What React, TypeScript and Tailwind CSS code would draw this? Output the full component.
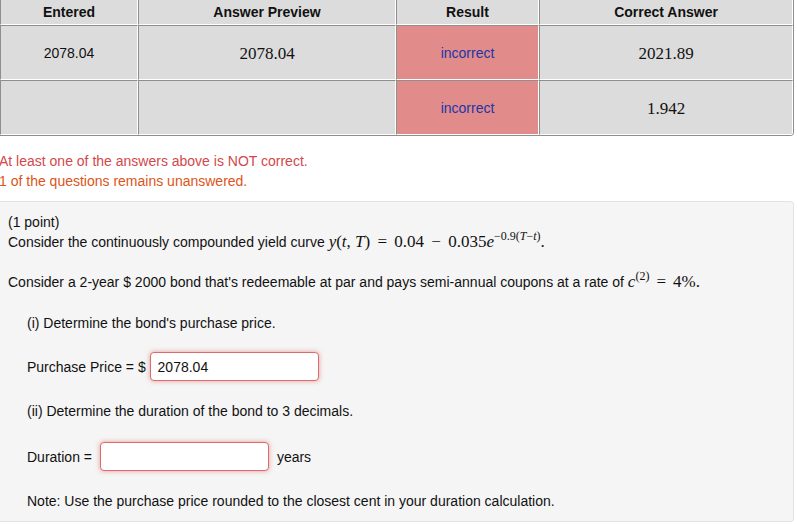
import React from "react";

const sans = { fontFamily: '"Liberation Sans", Arial, Helvetica, sans-serif' };
const serif = { fontFamily: '"Liberation Serif", "Times New Roman", serif' };

function Cell({
  children,
  className = "",
  top = true,
}: {
  children?: React.ReactNode;
  className?: string;
  top?: boolean;
}) {
  return (
    <div
      className={`flex items-center justify-center border-l border-l-[#8e8e8e] border-r border-r-white border-b border-b-white ${
        top ? "border-t border-t-[#8e8e8e]" : ""
      } ${className}`}
    >
      {children}
    </div>
  );
}

export default function App() {
  return (
    <div className="w-[797px] h-[524px] bg-white overflow-hidden text-[14px] text-[#111]" style={sans}>
      {/* Results table */}
      <div className="w-[794px] border-r border-b border-[#8e8e8e] rounded-br-[4px] overflow-hidden">
        <div className="grid grid-cols-[138px_258px_143px_254px] grid-rows-[25px_55px_55px] bg-[#dcdcdc]">
          <Cell top={false} className="font-bold">Entered</Cell>
          <Cell top={false} className="font-bold">Answer Preview</Cell>
          <Cell top={false} className="font-bold">Result</Cell>
          <Cell top={false} className="font-bold">Correct Answer</Cell>

          <Cell className="pt-[2px]">2078.04</Cell>
          <Cell className="text-[17px] pt-[2px]">
            <span style={serif}>2078.04</span>
          </Cell>
          <Cell className="bg-[#e18b8b] text-[#2036a8] pt-[2px]">incorrect</Cell>
          <Cell className="text-[17px] pt-[2px]">
            <span style={serif}>2021.89</span>
          </Cell>

          <Cell></Cell>
          <Cell></Cell>
          <Cell className="bg-[#e18b8b] text-[#2036a8] pt-[2px]">incorrect</Cell>
          <Cell className="text-[17px] pt-[2px]">
            <span style={serif}>1.942</span>
          </Cell>
        </div>
      </div>

      {/* Messages */}
      <div className="mt-[15px] leading-[20px] -ml-[1px]">
        <div className="text-[#d4474b]">At least one of the answers above is NOT correct.</div>
        <div className="text-[#dd5417]">1 of the questions remains unanswered.</div>
      </div>

      {/* Problem box */}
      <div className="mt-[10px] w-[794px] h-[321px] bg-[#f5f5f5] border-t border-r border-b border-[#e3e3e3] rounded-r-[4px] pt-[10px] pl-[8px] leading-[20px]">
        <div className="h-[20px]">(1 point)</div>
        <div className="h-[20px] flex items-baseline whitespace-nowrap">
          <span>Consider the continuously compounded yield curve&nbsp;</span>
          <span className="text-[17px] leading-[20px]" style={serif}>
            <i>y</i>(<i>t</i>, <i>T</i>) <span className="mx-[3px]">=</span> 0.04 <span className="mx-[3px]">−</span> 0.035<i>e</i>
            <span className="text-[12px] relative -top-[7px] leading-none">
              −0.9(<i>T</i>−<i>t</i>)
            </span>
            .
          </span>
        </div>
        <div className="mt-[20px] h-[20px] flex items-baseline whitespace-nowrap">
          <span>Consider a 2-year $ 2000 bond that's redeemable at par and pays semi-annual coupons at a rate of&nbsp;</span>
          <span className="text-[17px] leading-[20px]" style={serif}>
            <i>c</i>
            <span className="text-[12px] relative -top-[7px] leading-none">(2)</span>
            <span className="mx-[7px]">=</span>4%.
          </span>
        </div>

        <div className="pl-[19px]">
          <div className="mt-[21px] h-[20px]">(i) Determine the bond's purchase price.</div>
          <div className="mt-[19px] flex items-center h-[29px]">
            <span>Purchase Price = $&nbsp;</span>
            <div className="w-[169px] h-[29px] bg-white border border-[#dc6b6b] rounded-[4px] shadow-[0_0_5px_rgba(220,80,80,0.55)] flex items-center pl-[7px]">
              2078.04
            </div>
          </div>
          <div className="mt-[20px] h-[20px]">(ii) Determine the duration of the bond to 3 decimals.</div>
          <div className="mt-[21px] flex items-center h-[29px]">
            <span>Duration =&nbsp;</span>
            <div className="ml-[4px] w-[169px] h-[29px] bg-white border border-[#dc6b6b] rounded-[4px] shadow-[0_0_5px_rgba(220,80,80,0.55)]"></div>
            <span className="ml-[8px]">years</span>
          </div>
          <div className="mt-[20px] h-[20px]">Note: Use the purchase price rounded to the closest cent in your duration calculation.</div>
        </div>
      </div>
    </div>
  );
}
